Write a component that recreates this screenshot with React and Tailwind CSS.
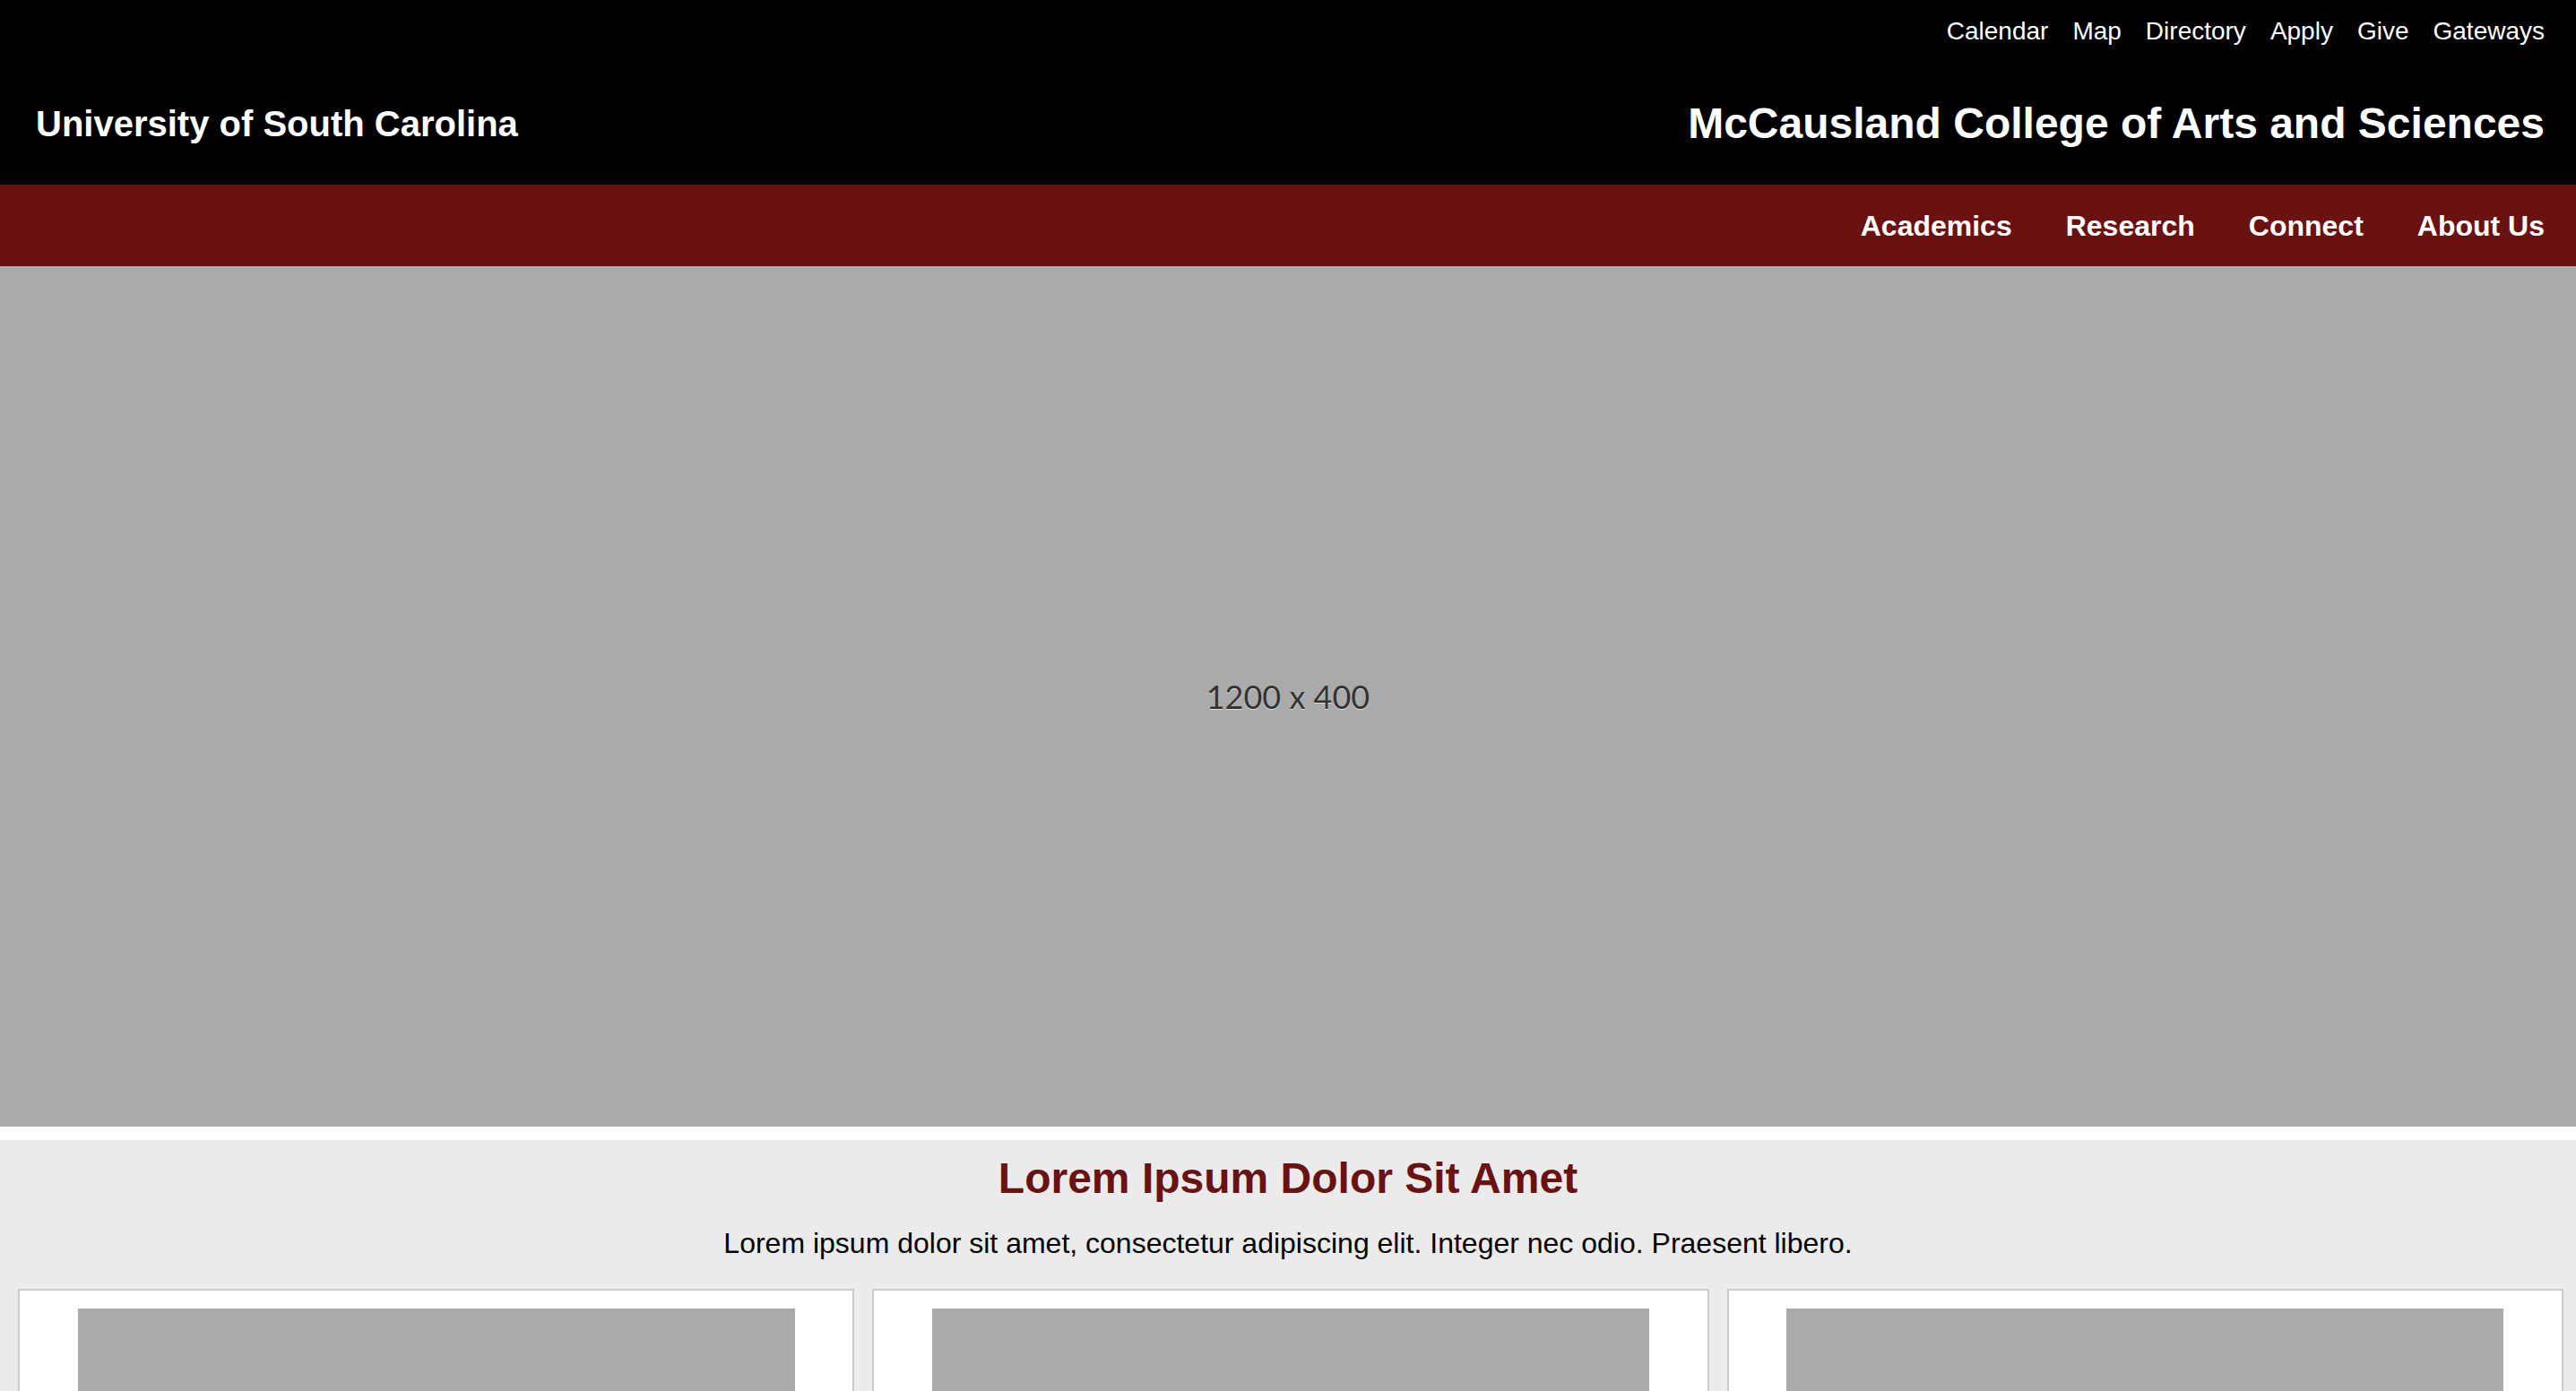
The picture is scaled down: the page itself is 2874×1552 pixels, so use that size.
import React from "react";

const topLinks = ["Calendar", "Map", "Directory", "Apply", "Give", "Gateways"];
const navLinks = ["Academics", "Research", "Connect", "About Us"];

const App = () => {
  return (
    <div className="min-h-screen bg-white font-['Liberation_Sans',Arial,sans-serif]">
      {/* Header */}
      <header className="bg-black text-white">
        <div className="flex h-[66px] items-center justify-end gap-[27px] pr-[35px] pt-[3px]">
          {topLinks.map((link) => (
            <a key={link} href="#" className="text-[28px] leading-none">
              {link}
            </a>
          ))}
        </div>
        <div className="flex h-[140px] items-center justify-between pl-[40px] pr-[35px] pt-[3px]">
          <span className="text-[40px] font-bold leading-none">University of South Carolina</span>
          <span className="text-[48px] font-bold leading-none">McCausland College of Arts and Sciences</span>
        </div>
      </header>

      {/* Main nav */}
      <nav className="flex h-[91px] items-center justify-end gap-[60px] bg-[#6a1212] pr-[35px]">
        {navLinks.map((link) => (
          <a key={link} href="#" className="text-[32px] font-bold leading-none text-white">
            {link}
          </a>
        ))}
      </nav>

      {/* Hero placeholder */}
      <div className="flex h-[960px] items-center justify-center bg-[#aaaaaa]">
        <span className="font-['Lato',sans-serif] text-[36px] text-[#333333] [text-shadow:0_1px_0_#dddddd]">
          1200 x 400
        </span>
      </div>

      {/* Intro */}
      <section className="mt-[15px] bg-[#ebebeb] pb-10 pt-[15px]">
        <h2 className="text-center text-[48px] font-bold leading-[55px] text-[#6a1212]">
          Lorem Ipsum Dolor Sit Amet
        </h2>
        <p className="mt-[27px] text-center text-[32px] leading-[37px] text-black">
          Lorem ipsum dolor sit amet, consectetur adipiscing elit. Integer nec odio. Praesent libero.
        </p>
        <div className="mt-[32px] grid grid-cols-3 gap-[20px] pl-[20px] pr-[14px]">
          {[1, 2, 3].map((n) => (
            <div key={n} className="border-2 border-[#cccccc] bg-white px-[63px] pt-[20px] pb-[20px]">
              <div className="mx-auto h-[400px] w-[800px] max-w-full bg-[#aaaaaa]"></div>
            </div>
          ))}
        </div>
      </section>
    </div>
  );
};

export default App;
